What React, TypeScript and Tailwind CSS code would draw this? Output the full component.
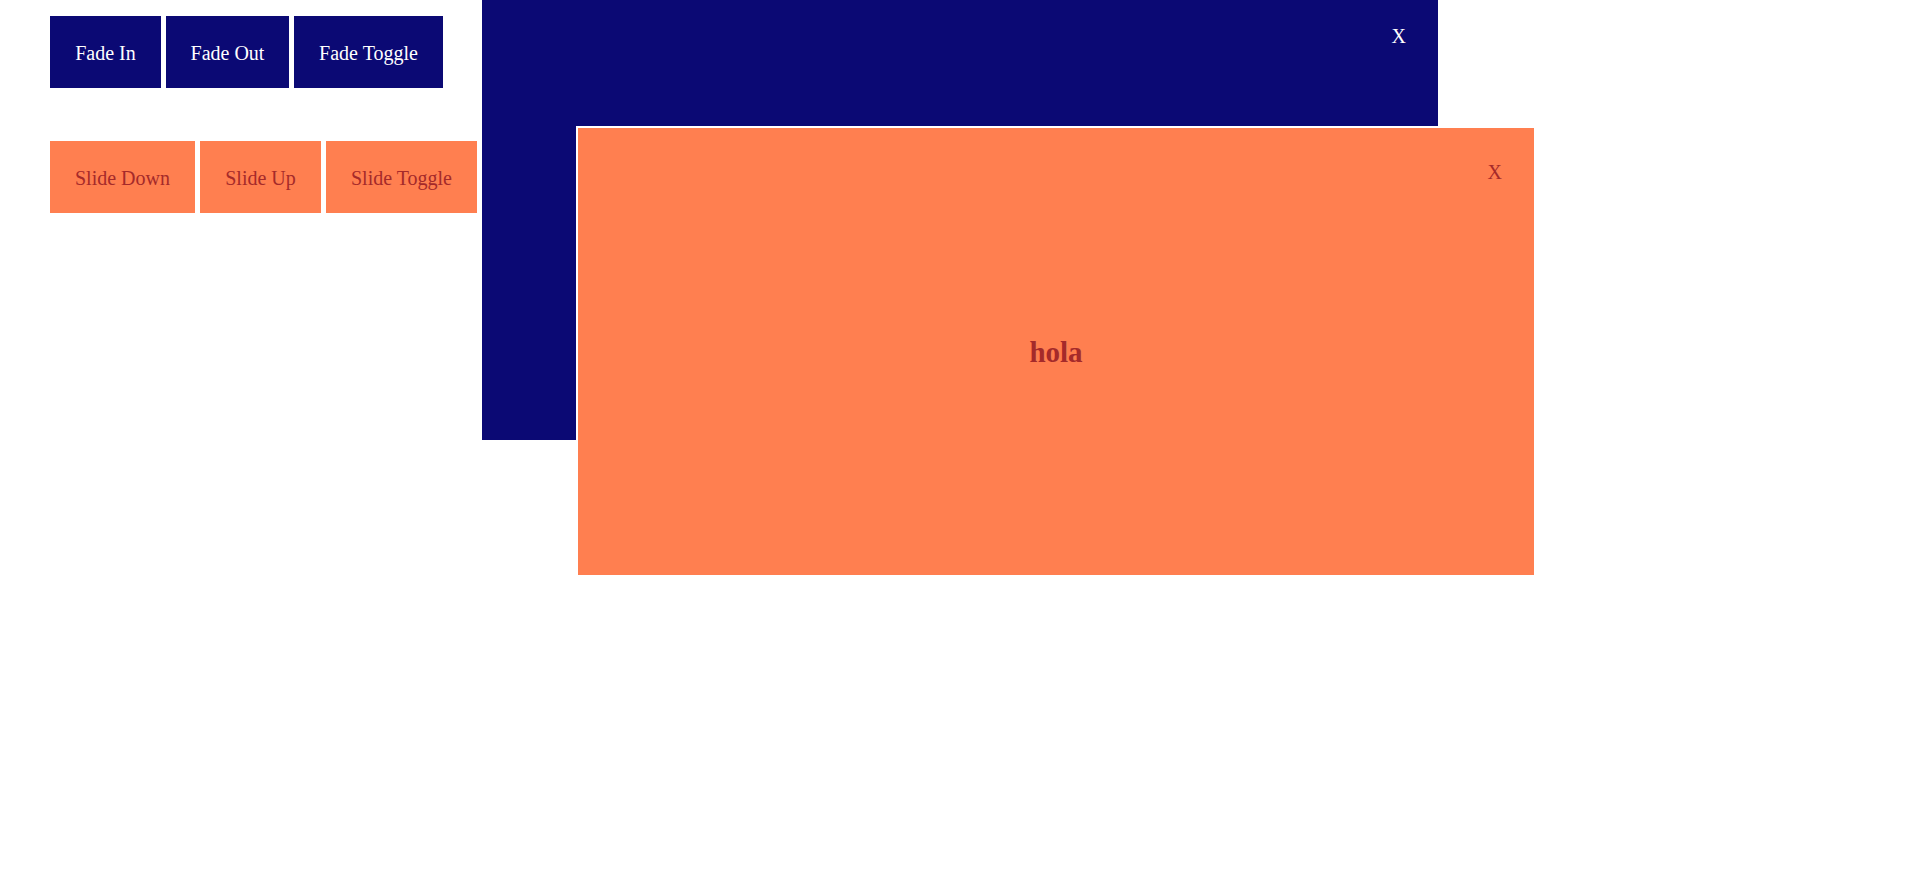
import React from "react";

const fadeButtons = [
    { label: "Fade In", w: "w-[111px]" },
    { label: "Fade Out", w: "w-[123px]" },
    { label: "Fade Toggle", w: "w-[149px]" },
];

const slideButtons = [
    { label: "Slide Down", w: "w-[145px]" },
    { label: "Slide Up", w: "w-[121px]" },
    { label: "Slide Toggle", w: "w-[151px]" },
];

export default function App() {
    return (
        <div
            className="relative min-h-screen bg-white overflow-hidden"
            style={{ fontFamily: '"Liberation Serif", "Times New Roman", serif' }}
        >
            {/* Controls */}
            <div className="flex flex-col gap-[53px] pl-[50px] pt-[16px]">
                <div className="flex gap-[5px]">
                    {fadeButtons.map((b) => (
                        <button
                            key={b.label}
                            className={`${b.w} h-[72px] pt-[2px] bg-[#0b0974] text-white text-[20px] flex items-center justify-center`}
                        >
                            {b.label}
                        </button>
                    ))}
                </div>
                <div className="flex gap-[5px]">
                    {slideButtons.map((b) => (
                        <button
                            key={b.label}
                            className={`${b.w} h-[72px] pt-[2px] bg-[#ff7f50] text-[#a52a2a] text-[20px] flex items-center justify-center`}
                        >
                            {b.label}
                        </button>
                    ))}
                </div>
            </div>

            {/* Fade panel */}
            <div className="absolute left-[480px] top-[-9px] w-[960px] h-[451px] border-2 border-white bg-[#0b0974]">
                <span className="absolute right-[32px] top-[32px] text-white text-[20px] leading-[23px]">X</span>
            </div>

            {/* Slide panel */}
            <div className="absolute left-[576px] top-[126px] w-[960px] h-[451px] border-2 border-white bg-[#ff7f50] flex items-center justify-center">
                <span className="absolute right-[32px] top-[33px] text-[#a52a2a] text-[20px] leading-[23px]">X</span>
                <h2 className="pt-[2px] text-[#a52a2a] text-[29px] font-bold">hola</h2>
            </div>
        </div>
    );
}
